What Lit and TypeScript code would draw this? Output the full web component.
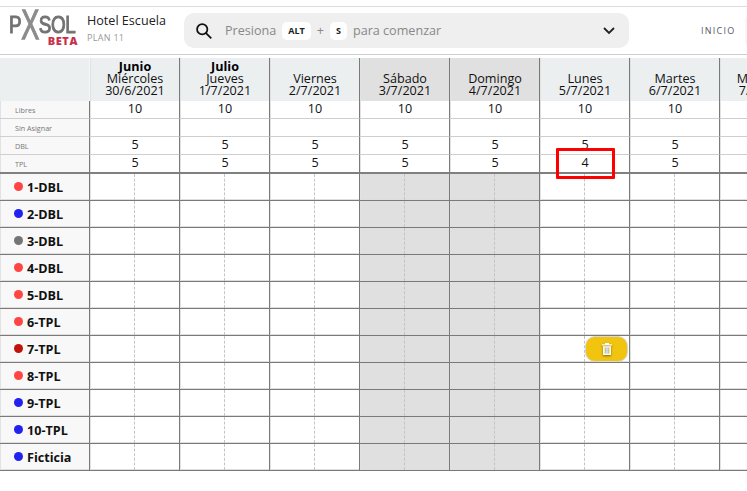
import { LitElement, html, css, nothing } from 'lit';
import { customElement } from 'lit/decorators.js';

interface Day {
    month?: string;
    name: string;
    date: string;
    weekend?: boolean;
}

const DAYS: Day[] = [
    { month: 'Junio', name: 'Miércoles', date: '30/6/2021' },
    { month: 'Julio', name: 'Jueves', date: '1/7/2021' },
    { name: 'Viernes', date: '2/7/2021' },
    { name: 'Sábado', date: '3/7/2021', weekend: true },
    { name: 'Domingo', date: '4/7/2021', weekend: true },
    { name: 'Lunes', date: '5/7/2021' },
    { name: 'Martes', date: '6/7/2021' },
    { name: 'Miércoles', date: '7/7/2021' },
];

const RED = '#ff4444';
const BLUE = '#2222ee';

const ROOMS = [
    { name: '1-DBL', color: RED },
    { name: '2-DBL', color: BLUE },
    { name: '3-DBL', color: '#757575' },
    { name: '4-DBL', color: RED },
    { name: '5-DBL', color: RED },
    { name: '6-TPL', color: RED },
    { name: '7-TPL', color: '#c0140a' },
    { name: '8-TPL', color: RED },
    { name: '9-TPL', color: BLUE },
    { name: '10-TPL', color: BLUE },
    { name: 'Ficticia', color: BLUE },
];

const SUMMARY = [
    { label: 'Libres', values: ['10', '10', '10', '10', '10', '10', '10', '10'] },
    { label: 'Sin Asignar', values: ['', '', '', '', '', '', '', ''] },
    { label: 'DBL', values: ['5', '5', '5', '5', '5', '5', '5', '5'] },
    { label: 'TPL', values: ['5', '5', '5', '5', '5', '4', '5', '5'] },
];

@customElement('app-root')
export class AppRoot extends LitElement {
    static override styles = css`
        :host {
            display: block;
            width: 747px;
            height: 491px;
            overflow: hidden;
            background: #fff;
            font-family: 'Open Sans', sans-serif;
            color: #111;
        }

        .topbar {
            box-sizing: border-box;
            height: 49px;
            margin-top: 6px;
            border-top: 1px solid #dcdcdc;
            border-bottom: 1px solid #cfcfcf;
            display: flex;
            align-items: center;
            width: 800px;
        }

        .logo {
            width: 87px;
            padding-left: 9px;
            box-sizing: border-box;
            flex-shrink: 0;
            line-height: 1;
        }

        .logo-main {
            font-family: 'Liberation Sans', sans-serif;
            font-size: 23px;
            letter-spacing: -0.5px;
            color: #727272;
            -webkit-text-stroke: 1px #727272;
            height: 20px;
            line-height: 20px;
            display: flex;
            align-items: center;
            transform: scale(0.82, 1);
            transform-origin: left center;
        }

        .logo-x {
            display: inline-block;
            font-size: 33px;
            color: #8c8c8c;
            -webkit-text-stroke: 1px #8c8c8c;
            transform: scale(1, 1.3);
        }

        .logo-beta {
            font-family: 'Open Sans', sans-serif;
            font-weight: 800;
            font-size: 11px;
            letter-spacing: 0.6px;
            color: #c8304a;
            text-align: right;
            padding-right: 9px;
        }

        .hotel {
            width: 97px;
            flex-shrink: 0;
            margin-top: -4px;
        }

        .hotel-name {
            font-size: 12.6px;
            line-height: 18px;
            color: #222;
        }

        .hotel-plan {
            font-size: 9px;
            line-height: 16px;
            color: #999;
            letter-spacing: 0.3px;
        }

        .search {
            box-sizing: border-box;
            width: 445px;
            height: 35px;
            background: #efefef;
            border-radius: 10px;
            display: flex;
            align-items: center;
            padding: 0 14px 0 12px;
            color: #888;
            font-size: 12.6px;
            flex-shrink: 0;
        }

        .lens {
            margin-right: 13px;
        }

        .key {
            background: #fff;
            color: #222;
            font-size: 9px;
            font-weight: 700;
            border-radius: 5px;
            height: 18px;
            line-height: 18px;
            padding: 0 6px;
            margin: 0 6px;
        }

        .chevron {
            margin-left: auto;
        }

        .nav {
            margin-left: 72px;
            font-size: 9px;
            letter-spacing: 1.25px;
            color: #556;
        }

        .nav-box {
            box-sizing: border-box;
            width: 30px;
            height: 30px;
            margin-left: 9px;
            background: #f6f6f6;
            border-radius: 4px;
        }

        .grid {
            margin-top: 3px;
            display: grid;
            grid-template-columns: repeat(9, 90px);
            grid-template-rows: 43px repeat(3, 18px) 19px repeat(11, 27px);
            width: 810px;
        }

        .cell {
            box-sizing: border-box;
            position: relative;
            border-right: 1px solid #7a7a7a;
            box-shadow: inset 1px 0 0 #e2e2e2;
        }

        .head {
            background: #ebeff0;
            text-align: center;
            font-size: 12.6px;
            line-height: 12px;
            display: flex;
            flex-direction: column;
            justify-content: flex-end;
            padding: 0 0 4px 1px;
            color: #111;
        }

        .head.corner {
            border-right: 1px solid #f6f6f6;
            box-shadow: none;
        }

        .head.weekend {
            background: #e0e0e0;
        }

        .month {
            font-weight: 700;
            color: #000;
        }

        .sum-label {
            background: #f8f8f8;
            font-size: 7.2px;
            color: #777;
            padding-left: 15px;
            display: flex;
            align-items: center;
            border-bottom: 1px solid #cfcfcf;
        }

        .sum-value {
            font-size: 12.6px;
            line-height: 15px;
            text-align: center;
            color: #111;
            padding-left: 1px;
            border-bottom: 1px solid #cfcfcf;
        }

        .last-sum {
            border-bottom: 2px solid #808080;
        }

        .alert {
            position: absolute;
            left: 16px;
            top: -7px;
            width: 59px;
            height: 31px;
            box-sizing: border-box;
            border: 3px solid #f00;
            border-radius: 1px;
            z-index: 2;
        }

        .room {
            background: #f8f8f8;
            display: flex;
            align-items: center;
            padding-left: 14px;
            gap: 4px;
            font-size: 12.6px;
            font-weight: 700;
            color: #111;
            border-bottom: 1px solid #7a7a7a;
            box-shadow: inset 1px 0 0 #e2e2e2, inset 0 -1px 0 #dedede;
        }

        .dot {
            width: 9px;
            height: 9px;
            border-radius: 50%;
            flex-shrink: 0;
            margin-top: -1px;
        }

        .slot {
            border-bottom: 1px solid #7a7a7a;
            background: #fff;
            box-shadow: inset 1px 0 0 #e2e2e2, inset 0 -1px 0 #dedede;
        }

        .slot.weekend {
            background: #e0e0e0;
        }

        .slot::before {
            content: '';
            position: absolute;
            left: 44px;
            top: 0;
            bottom: 0;
            border-left: 1px dashed #c4c4c4;
        }

        .booking {
            position: absolute;
            left: 45px;
            top: 0;
            width: 43px;
            height: 26px;
            box-sizing: border-box;
            background: #f1c40f;
            border: 1px solid #d8d8d8;
            border-radius: 10px;
            display: flex;
            align-items: center;
            justify-content: center;
            z-index: 1;
        }

        .trash {
            filter: drop-shadow(0 1px 1px rgba(0, 0, 0, 0.45));
        }
    `;

    private renderTrash() {
        return html`<svg class="trash" width="10" height="12" viewBox="0 0 10 12" aria-hidden="true">
            <path d="M0 1.2h10v1.3H0z M3 0h4v1.2H3z" fill="#fff"></path>
            <path d="M1 3.2h8V12H1z" fill="#fff"></path>
            <path d="M3.2 4.4v6.2" stroke="#c9a93a" stroke-width="1"></path>
            <path d="M5 4.4v6.2" stroke="#8fb7c9" stroke-width="1"></path>
            <path d="M6.8 4.4v6.2" stroke="#c9a93a" stroke-width="1"></path>
        </svg>`;
    }

    override render() {
        return html`
            <div class="topbar">
                <div class="logo">
                    <div class="logo-main">P<span class="logo-x">X</span>SOL</div>
                    <div class="logo-beta">BETA</div>
                </div>
                <div class="hotel">
                    <div class="hotel-name">Hotel Escuela</div>
                    <div class="hotel-plan">PLAN 11</div>
                </div>
                <div class="search">
                    <svg class="lens" width="16" height="16" viewBox="0 0 18 18" fill="none" stroke="#111" stroke-width="2">
                        <circle cx="7" cy="7" r="5.8"></circle>
                        <path d="M11 11l6.2 6.2"></path>
                    </svg>
                    <span>Presiona</span>
                    <span class="key">ALT</span>
                    <span>+</span>
                    <span class="key">S</span>
                    <span>para comenzar</span>
                    <svg class="chevron" width="12" height="8" viewBox="0 0 12 8" fill="none" stroke="#222" stroke-width="1.8">
                        <path d="M1 1l5 5 5-5"></path>
                    </svg>
                </div>
                <div class="nav">INICIO</div>
                <div class="nav-box"></div>
            </div>

            <div class="grid">
                <div class="cell head corner"></div>
                ${DAYS.map((d) => html`
                    <div class="cell head ${d.weekend ? 'weekend' : ''}">
                        ${d.month ? html`<div class="month">${d.month}</div>` : nothing}
                        <div>${d.name}</div>
                        <div>${d.date}</div>
                    </div>
                `)}

                ${SUMMARY.map((row, i) => {
                    const last = i === SUMMARY.length - 1 ? 'last-sum' : '';
                    return html`
                        <div class="cell sum-label ${last}">${row.label}</div>
                        ${row.values.map((v, j) => html`
                            <div class="cell sum-value ${last}">
                                ${v}
                                ${last && j === 5 ? html`<div class="alert"></div>` : nothing}
                            </div>
                        `)}
                    `;
                })}

                ${ROOMS.map((room) => html`
                    <div class="cell room">
                        <span class="dot" style="background:${room.color}"></span>
                        <span>${room.name}</span>
                    </div>
                    ${DAYS.map((d, j) => html`
                        <div class="cell slot ${d.weekend ? 'weekend' : ''}">
                            ${room.name === '7-TPL' && j === 5
                                ? html`<div class="booking">${this.renderTrash()}</div>`
                                : nothing}
                        </div>
                    `)}
                `)}
            </div>
        `;
    }
}

declare global {
    interface HTMLElementTagNameMap {
        'app-root': AppRoot;
    }
}
